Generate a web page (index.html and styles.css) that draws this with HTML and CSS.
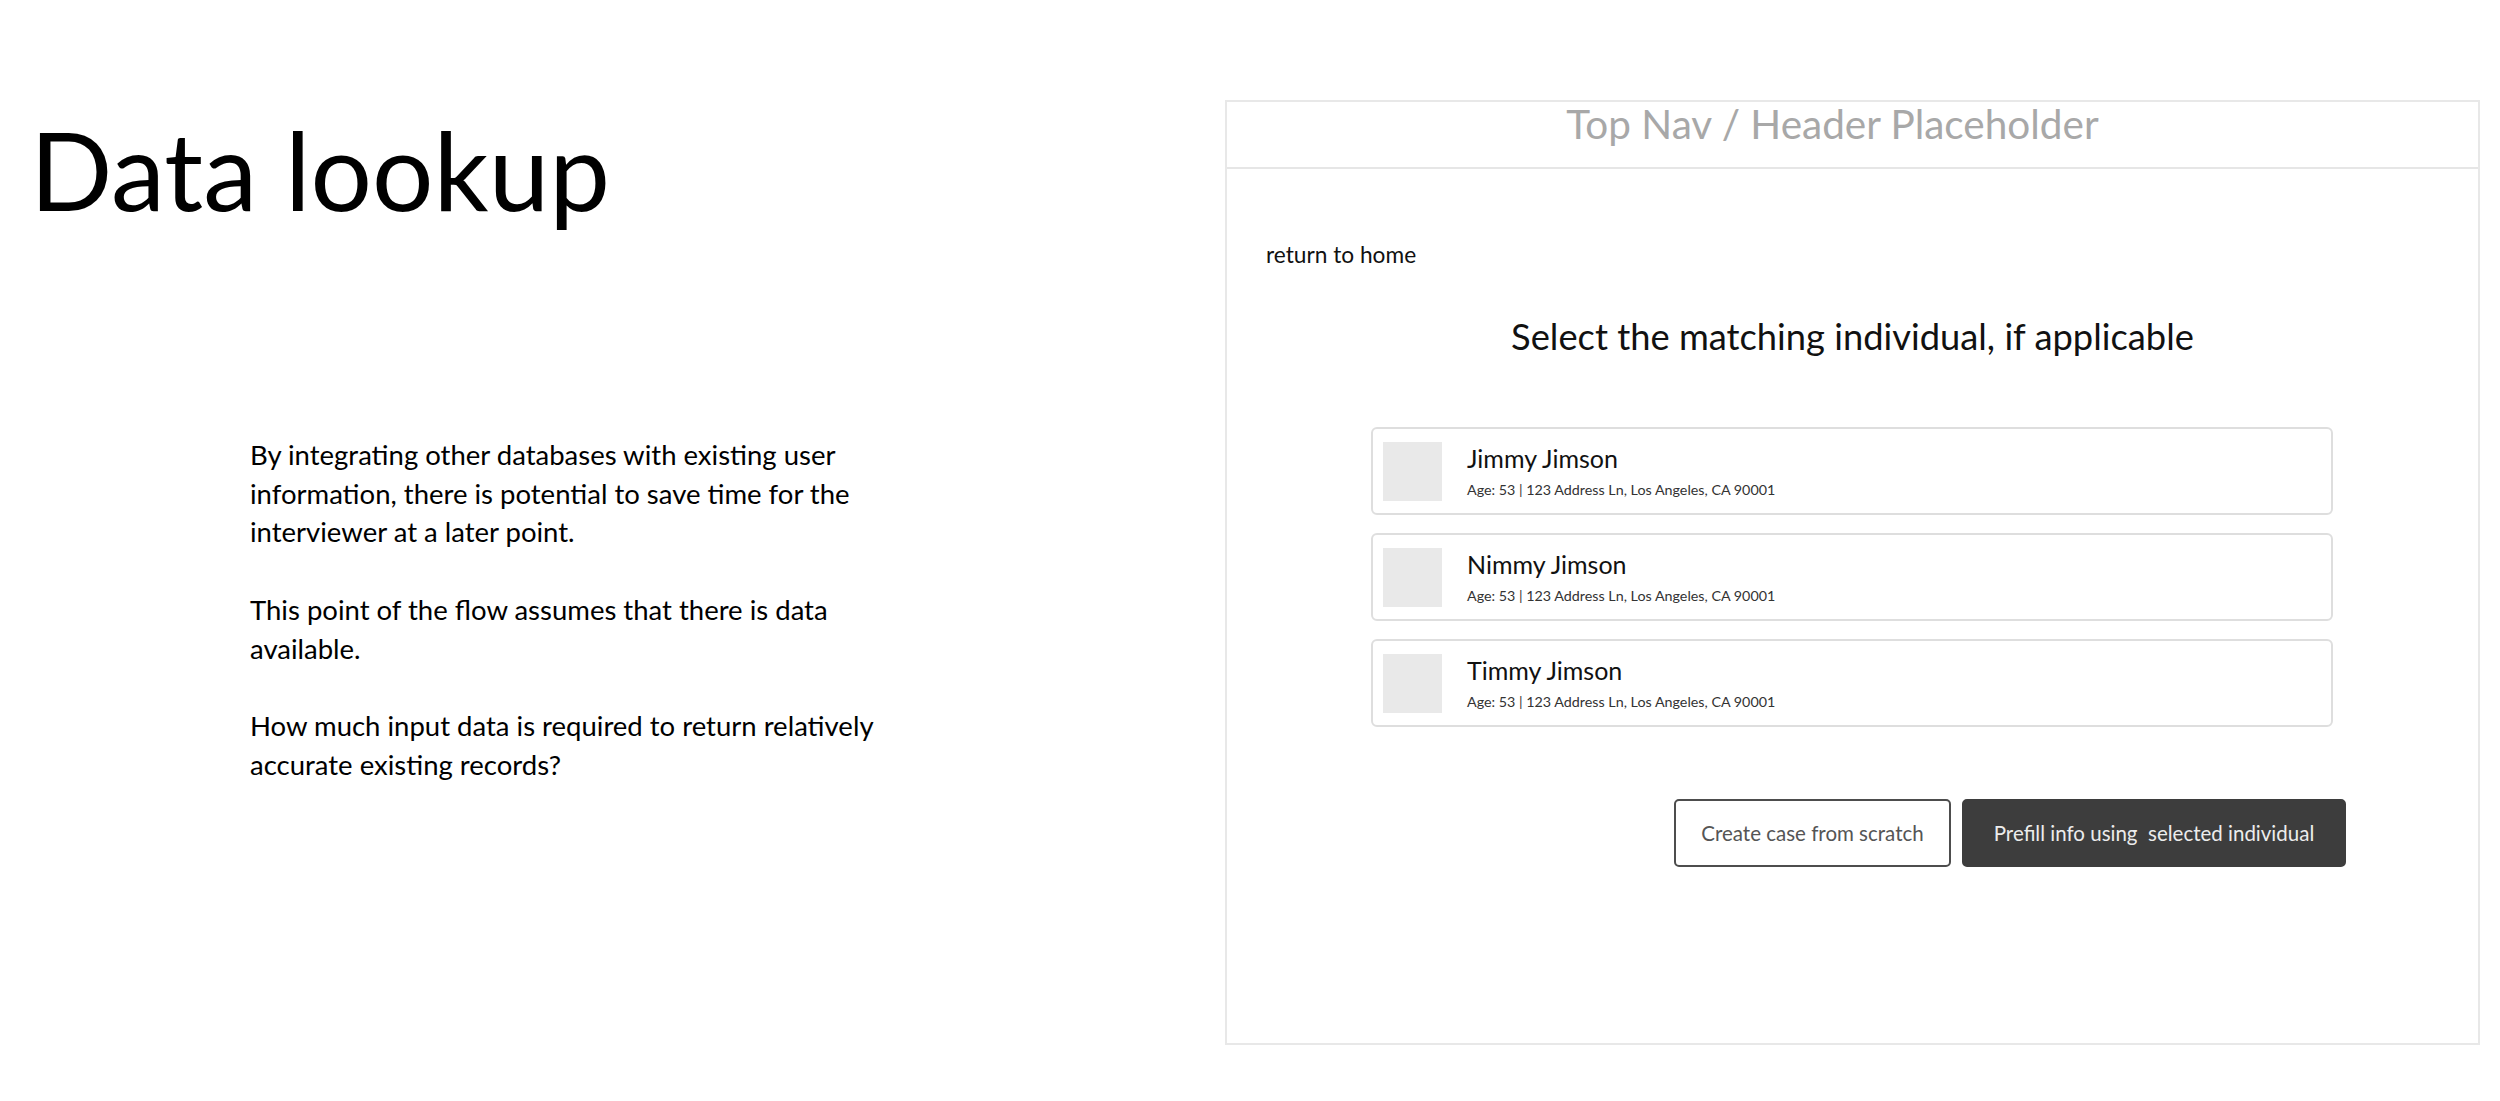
FILE: index.html
```html
<!DOCTYPE html>
<html lang="en">
<head>
<meta charset="utf-8">
<title>Data lookup</title>
<link rel="stylesheet" href="styles.css">
</head>
<body>
<main class="slide">
  <section class="notes">
    <h1 class="title">Data lookup</h1>
    <div class="copy">
      <p>By integrating other databases with existing user<br>information, there is potential to save time for the<br>interviewer at a later point.</p>
      <p>This point of the flow assumes that there is data<br>available.</p>
      <p>How much input data is required to return relatively<br>accurate existing records?</p>
    </div>
  </section>
  <section class="frame">
    <header class="frame-head">Top Nav / Header Placeholder</header>
    <div class="frame-body">
      <a class="back">return to home</a>
      <h2 class="prompt">Select the matching individual, if applicable</h2>
      <ul class="results">
        <li class="card">
          <span class="avatar"></span>
          <div class="info">
            <div class="name">Jimmy Jimson</div>
            <div class="meta">Age: 53 | 123 Address Ln, Los Angeles, CA 90001</div>
          </div>
        </li>
        <li class="card">
          <span class="avatar"></span>
          <div class="info">
            <div class="name">Nimmy Jimson</div>
            <div class="meta">Age: 53 | 123 Address Ln, Los Angeles, CA 90001</div>
          </div>
        </li>
        <li class="card">
          <span class="avatar"></span>
          <div class="info">
            <div class="name">Timmy Jimson</div>
            <div class="meta">Age: 53 | 123 Address Ln, Los Angeles, CA 90001</div>
          </div>
        </li>
      </ul>
      <div class="actions">
        <button class="btn btn-outline">Create case from scratch</button>
        <button class="btn btn-solid">Prefill info using&nbsp; selected individual</button>
      </div>
    </div>
  </section>
</main>
</body>
</html>
```
FILE: styles.css
```css
* { box-sizing: border-box; }

html, body {
  margin: 0;
  padding: 0;
  background: #ffffff;
}

body {
  width: 2500px;
  height: 1101px;
  overflow: hidden;
  font-family: Lato, "Open Sans", sans-serif;
  color: #111;
}

.slide {
  display: flex;
  align-items: flex-start;
}

.notes {
  width: 1225px;
  flex: none;
}

.title {
  margin: 104px 0 0 30px;
  font-family: Lato, sans-serif;
  font-weight: 400;
  font-size: 108.5px;
  line-height: 130px;
  color: #000;
}

.copy {
  margin: 202px 0 0 250px;
  font-family: Lato, sans-serif;
  font-size: 27.5px;
  line-height: 38.7px;
  color: #000;
}

.copy p {
  margin: 0 0 38.7px;
}

.frame {
  flex: none;
  width: 1255px;
  height: 945px;
  margin-top: 100px;
  border: 2px solid #e8e8e8;
  display: flex;
  flex-direction: column;
}

.frame-head {
  height: 67px;
  border-bottom: 2px solid #e6e6e6;
  text-align: center;
  font-size: 40.5px;
  line-height: 44px;
  padding: 0 40px 0 0;
  color: #a8a8a8;
}

.frame-body {
  display: flex;
  flex-direction: column;
  padding: 72px 0 0 39px;
}

.back {
  font-size: 22.7px;
  line-height: 27px;
  color: #111;
  align-self: flex-start;
}

.prompt {
  margin: 47px 0 0 -39px;
  font-size: 36.3px;
  line-height: 42px;
  font-weight: 400;
  text-align: center;
  color: #111;
}

.results {
  list-style: none;
  margin: 70px 0 0 105px;
  padding: 0;
  width: 962px;
  display: flex;
  flex-direction: column;
  gap: 18px;
}

.card {
  height: 88px;
  border: 2px solid #dedede;
  border-radius: 6px;
  display: flex;
  align-items: center;
  padding-left: 10px;
  gap: 25px;
}

.avatar {
  width: 59px;
  height: 59px;
  background: #e9e9e9;
  flex: none;
}

.info {
  display: flex;
  flex-direction: column;
  gap: 8px;
}

.name {
  font-size: 25px;
  line-height: 30px;
  color: #111;
}

.meta {
  font-size: 14.3px;
  line-height: 18px;
  color: #333;
}

.actions {
  display: flex;
  justify-content: flex-end;
  gap: 11px;
  margin: 72px 132px 0 0;
}

.btn {
  height: 68px;
  border-radius: 5px;
  font-family: Lato, sans-serif;
  font-size: 20.5px;
  padding: 0;
}

.btn-outline {
  width: 277px;
  background: #fff;
  border: 2px solid #4d4d4d;
  color: #555;
}

.btn-solid {
  width: 384px;
  background: #3d3d3d;
  border: 2px solid #3d3d3d;
  color: #ececec;
}
```
